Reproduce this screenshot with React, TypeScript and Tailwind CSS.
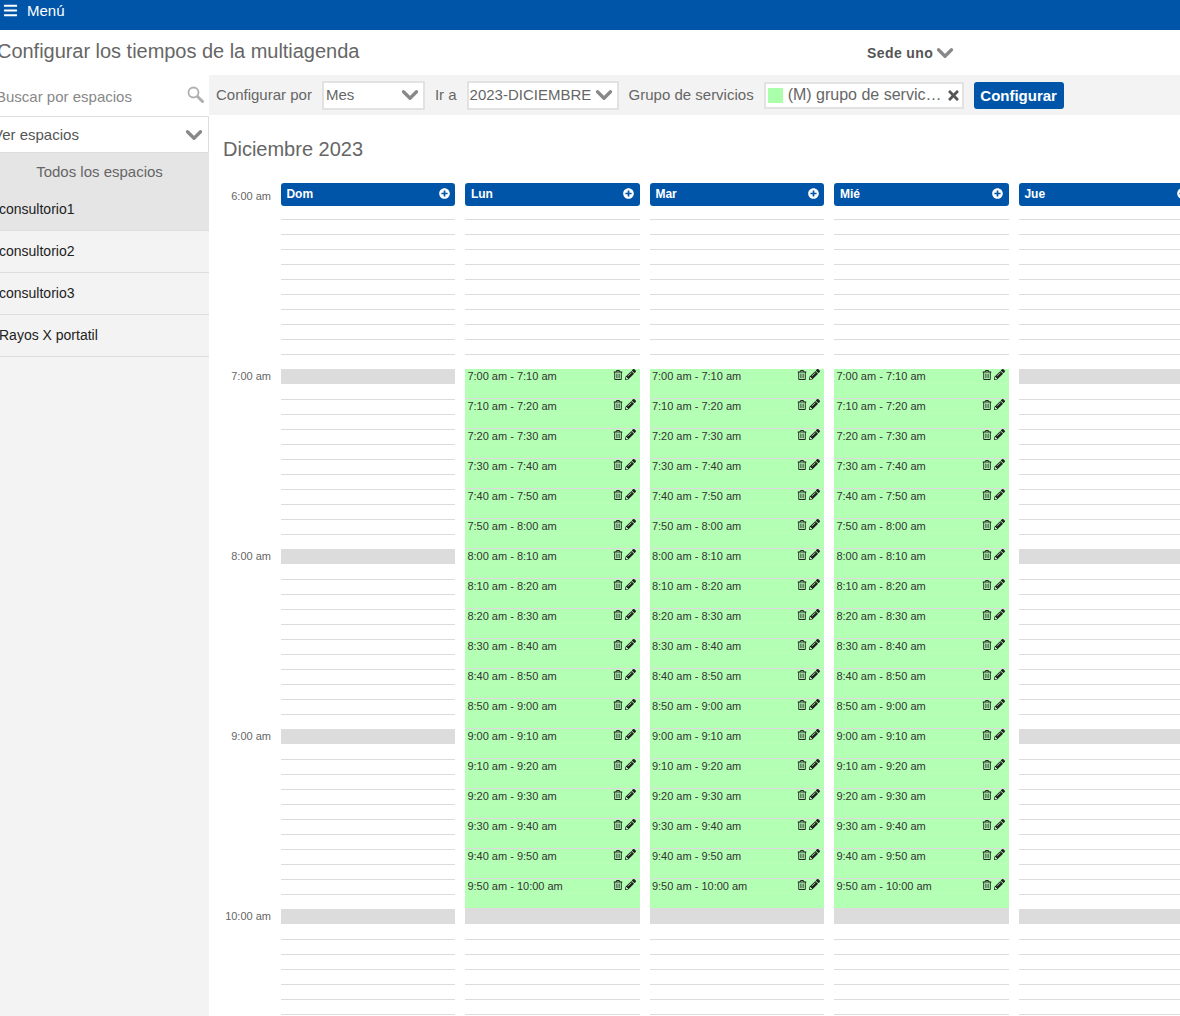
import { ChevronDown } from 'lucide-react'
import { FaBars, FaPlusCircle, FaRegTrashAlt, FaPencilAlt, FaTimes } from 'react-icons/fa'

const days = [
    { name: 'Dom', filled: false },
    { name: 'Lun', filled: true },
    { name: 'Mar', filled: true },
    { name: 'Mié', filled: true },
    { name: 'Jue', filled: false },
]

const spaces = ['consultorio1', 'consultorio2', 'consultorio3', 'Rayos X portatil']
const hours = ['6:00 am', '7:00 am', '8:00 am', '9:00 am', '10:00 am']

// rows are 15px, the first two sit behind the day header
const SLOT_COUNT = 56

const clock = (minutes: number) => {
    const h = Math.floor(minutes / 60)
    const m = minutes % 60
    return `${h}:${m < 10 ? '0' : ''}${m} am`
}

const appointments = Array.from({ length: 18 }, (_, i) => {
    const start = 420 + i * 10
    return `${clock(start)} - ${clock(start + 10)}`
})

const Chevron = ({ className = '' }: { className?: string }) => (
    <ChevronDown size={26} strokeWidth={3} className={`shrink-0 text-[#888] ${className}`} />
)

const SearchIcon = () => (
    <svg width="17" height="17" viewBox="0 0 17 17" className="-mt-1 shrink-0" fill="none" stroke="#b0b0b0">
        <circle cx="6.5" cy="6.5" r="5" strokeWidth="1.8" />
        <line x1="10.5" y1="10.5" x2="15.5" y2="15.5" strokeWidth="3" strokeLinecap="round" />
    </svg>
)

const Slot = ({ index }: { index: number }) => {
    if (index % 12 === 0) return <div className="h-[15px] bg-[#dcdcdc]" />
    if (index % 12 === 1) return <div className="h-[15px]" />
    return <div className="h-[15px] border-t border-[#dcdcdc]" />
}

const Appointment = ({ label }: { label: string }) => (
    <div className="h-[30px] border-b border-[#dcdcdc] bg-[#b3ffb3]">
        <div className="flex h-[15px] items-center justify-between border-b border-[#b9ffb9] pr-[4px] pl-[2px] text-[11px] text-[#333]">
            <span>{label}</span>
            <span className="-mt-[3px] flex items-center gap-[2px] text-[#222]">
                <FaRegTrashAlt size={10} />
                <FaPencilAlt size={11} />
            </span>
        </div>
    </div>
)

const DayColumn = ({ name, filled }: { name: string; filled: boolean }) => {
    const slots = Array.from({ length: SLOT_COUNT }, (_, i) => i)
    return (
        <div className="w-[174.5px] shrink-0">
            <div className="flex h-[23px] items-center justify-between rounded-[3px] bg-[#0055a8] pr-[5.5px] pb-[2px] pl-[5.5px] text-xs font-bold text-white">
                <span>{name}</span>
                <FaPlusCircle size={11} />
            </div>
            <div className="pt-[13px]">
                {slots.slice(2, 12).map((i) => (
                    <Slot key={i} index={i} />
                ))}
                {filled ? (
                    <>
                        {appointments.map((label) => (
                            <Appointment key={label} label={label} />
                        ))}
                        {slots.slice(48).map((i) => (
                            <Slot key={i} index={i} />
                        ))}
                    </>
                ) : (
                    slots.slice(12).map((i) => <Slot key={i} index={i} />)
                )}
            </div>
        </div>
    )
}

export default function App() {
    return (
        <div
            className="h-[1016px] w-[1180px] overflow-hidden bg-white text-[#666]"
            style={{ fontFamily: '"Liberation Sans", Arial, sans-serif' }}
        >
            <header className="flex h-[30px] items-start bg-[#0055a8] pt-px pl-[3px] text-[15px] leading-[20px] text-white">
                <FaBars size={15} className="mt-[2px]" />
                <span className="ml-[9px]">Menú</span>
            </header>

            <div className="flex h-[45px] items-center">
                <h1 className="-ml-[3px] w-[870px] pb-[3px] text-xl tracking-[-0.03px] text-[#666]">
                    Configurar los tiempos de la multiagenda
                </h1>
                <span className="text-sm font-bold tracking-[0.4px] text-[#555]">Sede uno</span>
                <Chevron className="-ml-px" />
            </div>

            <div className="flex h-[941px]">
                <aside className="h-full w-[209px] shrink-0 overflow-hidden bg-[#f3f3f3]">
                    <div className="flex h-[41px] items-center justify-between bg-white pt-[2px] pr-[5px] text-[15px] text-[#888]">
                        <span className="-ml-[4px] pt-[2px]">Buscar por espacios</span>
                        <SearchIcon />
                    </div>
                    <div className="flex h-[37px] items-center justify-between border-y border-r border-[#ddd] bg-white pr-px text-[15px] text-[#555]">
                        <span className="-ml-[7px] pt-[2px]">Ver espacios</span>
                        <Chevron />
                    </div>
                    <div className="flex h-[35px] items-center justify-center bg-[#e5e5e5] pt-[4px] pr-[10px] text-[15px]">
                        Todos los espacios
                    </div>
                    {spaces.map((space, i) => (
                        <div
                            key={space}
                            className={`-ml-px flex items-center border-b border-[#ddd] pl-px text-sm text-[#222] ${i === 0 ? 'h-[43px] bg-[#e5e5e5]' : 'h-[42px] pb-[2px]'}`}
                        >
                            <span className="-ml-px">{space}</span>
                        </div>
                    ))}
                </aside>

                <main className="min-w-0 flex-1">
                    <div className="flex h-[40px] items-center bg-[#f3f3f3] pl-[7px] text-[15px] text-[#666]">
                        <span>Configurar por</span>
                        <div className="ml-[10px] flex h-[29px] w-[103px] items-center justify-between border-2 border-[#e2e2e2] bg-white pl-[2px]">
                            Mes
                            <Chevron />
                        </div>
                        <span className="ml-[10px]">Ir a</span>
                        <div className="ml-[10px] flex h-[29px] w-[152px] items-center justify-between border-2 border-[#e2e2e2] bg-white pl-px">
                            2023-DICIEMBRE
                            <Chevron className="-ml-[4px]" />
                        </div>
                        <span className="ml-[10px]">Grupo de servicios</span>
                        <div className="ml-[10px] flex h-[27px] w-[200px] items-center border-2 border-[#e2e2e2] bg-white pl-[2px] text-base">
                            <span className="h-[15px] w-[15px] shrink-0 bg-[#aaffaa]" />
                            <span className="ml-[5px] w-[156px] truncate">(M) grupo de servicios</span>
                            <FaTimes size={15} className="ml-[2px] shrink-0 text-[#555]" />
                        </div>
                        <button className="ml-[10px] h-[27px] w-[90px] rounded-[3px] bg-[#0055a8] pt-[2px] text-[15px] font-bold text-white">
                            Configurar
                        </button>
                    </div>

                    <h2 className="mt-[22px] ml-[14px] text-xl leading-[24px] text-[#666]">Diciembre 2023</h2>

                    <div className="mt-[22px] flex">
                        <div className="w-[62px] shrink-0 pt-[6px] text-right text-[11px] text-[#666]">
                            {hours.map((hour) => (
                                <div key={hour} className="h-[180px] leading-[15px]">
                                    {hour}
                                </div>
                            ))}
                        </div>
                        <div className="ml-[9.9px] flex gap-[10px]">
                            {days.map((day) => (
                                <DayColumn key={day.name} name={day.name} filled={day.filled} />
                            ))}
                        </div>
                    </div>
                </main>
            </div>
        </div>
    )
}
